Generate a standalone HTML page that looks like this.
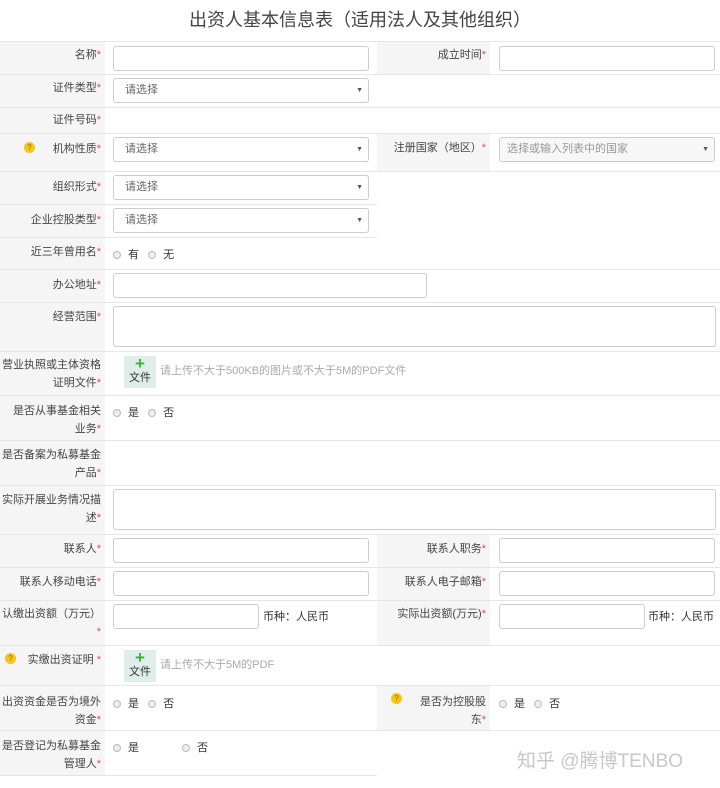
<!DOCTYPE html>
<html><head><meta charset="utf-8"><style>
*{margin:0;padding:0;box-sizing:border-box}
body{width:720px;height:788px;background:#fff;position:relative;overflow:hidden;font-family:"Liberation Sans","Noto Sans CJK SC",sans-serif;font-size:11px;color:#333}
.a{position:absolute}
.t{left:0;top:6px;width:720px;text-align:center;font-size:18px;color:#444}
.hl{position:absolute;height:1px;background:#e6e6e6}
.lb{position:absolute;background:#f5f5f5}
.lab{position:absolute;text-align:right;line-height:18px;font-size:11px;color:#444}
.lab i{font-style:normal;color:#d9534f}
.in{position:absolute;border:1px solid #ccc;border-radius:3px;background:#fff}
.sel{position:absolute;border:1px solid #ccc;border-radius:3px;background:#fff;color:#666;padding-left:11px;line-height:23px;font-size:11px}
.sel:after{content:"▼";position:absolute;right:5px;top:0;font-size:7px;color:#555}
.r{position:absolute;font-size:11px;line-height:14px}
.r b{display:inline-block;width:8px;height:8px;border:1px solid #bbb;border-radius:50%;background:#eee;margin-right:7px;vertical-align:-1px}
.q{display:inline-block;width:11px;height:11px;border-radius:50%;background:#f5c518;color:#8a6d00;font-size:8px;text-align:center;line-height:11px;position:absolute}
.up{position:absolute;width:32px;height:32px;background:#dfeeea;text-align:center;font-size:11px;line-height:12px;color:#333}
.up span{display:block;color:#3cb034;font-size:17px;font-weight:bold;line-height:16px}
.hint{position:absolute;color:#aaa;font-size:11px}
</style></head><body>
<div class="a t">出资人基本信息表（适用法人及其他组织）</div>

<div class="lb" style="left:0;top:41px;width:105px;height:734px"></div>
<div class="lb" style="left:377px;top:41px;width:113px;height:33px"></div>
<div class="lb" style="left:377px;top:133px;width:113px;height:38px"></div>
<div class="lb" style="left:377px;top:534px;width:113px;height:111px"></div>
<div class="lb" style="left:377px;top:685px;width:113px;height:45px"></div>

<div class="hl" style="left:0;top:41px;width:720px"></div>
<div class="hl" style="left:0;top:74px;width:720px"></div>
<div class="hl" style="left:0;top:107px;width:720px"></div>
<div class="hl" style="left:0;top:133px;width:720px"></div>
<div class="hl" style="left:0;top:171px;width:720px"></div>
<div class="hl" style="left:0;top:204px;width:377px"></div>
<div class="hl" style="left:0;top:237px;width:377px"></div>
<div class="hl" style="left:0;top:269px;width:720px"></div>
<div class="hl" style="left:0;top:302px;width:720px"></div>
<div class="hl" style="left:0;top:351px;width:720px"></div>
<div class="hl" style="left:0;top:395px;width:720px"></div>
<div class="hl" style="left:0;top:440px;width:720px"></div>
<div class="hl" style="left:0;top:485px;width:720px"></div>
<div class="hl" style="left:0;top:534px;width:720px"></div>
<div class="hl" style="left:0;top:567px;width:720px"></div>
<div class="hl" style="left:0;top:600px;width:720px"></div>
<div class="hl" style="left:0;top:645px;width:720px"></div>
<div class="hl" style="left:0;top:685px;width:720px"></div>
<div class="hl" style="left:0;top:730px;width:720px"></div>
<div class="hl" style="left:0;top:775px;width:377px"></div>

<div class="lab" style="left:0;top:46px;width:101px">名称<i>*</i></div>
<div class="lab" style="left:377px;top:46px;width:109px">成立时间<i>*</i></div>
<div class="lab" style="left:0;top:79px;width:101px">证件类型<i>*</i></div>
<div class="lab" style="left:0;top:111px;width:101px">证件号码<i>*</i></div>
<div class="q" style="left:24px;top:142px">?</div>
<div class="lab" style="left:0;top:140px;width:101px">机构性质<i>*</i></div>
<div class="lab" style="left:377px;top:139px;width:109px">注册国家（地区）<i>*</i></div>
<div class="lab" style="left:0;top:178px;width:101px">组织形式<i>*</i></div>
<div class="lab" style="left:0;top:211px;width:101px">企业控股类型<i>*</i></div>
<div class="lab" style="left:0;top:243px;width:101px">近三年曾用名<i>*</i></div>
<div class="lab" style="left:0;top:276px;width:101px">办公地址<i>*</i></div>
<div class="lab" style="left:0;top:308px;width:101px">经营范围<i>*</i></div>
<div class="lab" style="left:0;top:356px;width:101px">营业执照或主体资格<br>证明文件<i>*</i></div>
<div class="lab" style="left:0;top:402px;width:101px">是否从事基金相关<br>业务<i>*</i></div>
<div class="lab" style="left:0;top:446px;width:101px">是否备案为私募基金<br>产品<i>*</i></div>
<div class="lab" style="left:0;top:491px;width:101px">实际开展业务情况描<br>述<i>*</i></div>
<div class="lab" style="left:0;top:540px;width:101px">联系人<i>*</i></div>
<div class="lab" style="left:377px;top:540px;width:109px">联系人职务<i>*</i></div>
<div class="lab" style="left:0;top:573px;width:101px">联系人移动电话<i>*</i></div>
<div class="lab" style="left:377px;top:573px;width:109px">联系人电子邮箱<i>*</i></div>
<div class="lab" style="left:0;top:605px;width:101px">认缴出资额（万元）<br><i>*</i></div>
<div class="lab" style="left:377px;top:605px;width:109px">实际出资额(万元)<i>*</i></div>
<div class="q" style="left:5px;top:653px">?</div>
<div class="lab" style="left:0;top:651px;width:101px">实缴出资证明 <i>*</i></div>
<div class="lab" style="left:0;top:693px;width:101px">出资资金是否为境外<br>资金<i>*</i></div>
<div class="q" style="left:391px;top:693px">?</div>
<div class="lab" style="left:377px;top:693px;width:109px">是否为控股股<br>东<i>*</i></div>
<div class="lab" style="left:0;top:737px;width:101px">是否登记为私募基金<br>管理人<i>*</i></div>

<div class="in" style="left:113px;top:46px;width:256px;height:25px"></div>
<div class="in" style="left:499px;top:46px;width:216px;height:25px"></div>
<div class="sel" style="left:113px;top:78px;width:256px;height:25px">请选择</div>
<div class="sel" style="left:113px;top:137px;width:256px;height:25px">请选择</div>
<div class="sel" style="left:499px;top:137px;width:216px;height:25px;background:#f7f7f7;color:#999;padding-left:7px">选择或输入列表中的国家</div>
<div class="sel" style="left:113px;top:175px;width:256px;height:25px">请选择</div>
<div class="sel" style="left:113px;top:208px;width:256px;height:25px">请选择</div>
<div class="r" style="left:113px;top:248px"><b></b>有&nbsp;&nbsp;&nbsp;<b></b>无</div>
<div class="in" style="left:113px;top:273px;width:314px;height:25px"></div>
<div class="in" style="left:113px;top:306px;width:603px;height:41px"></div>
<div class="up" style="left:124px;top:356px"><span>+</span>文件</div>
<div class="hint" style="left:160px;top:362px">请上传不大于500KB的图片或不大于5M的PDF文件</div>
<div class="r" style="left:113px;top:406px"><b></b>是&nbsp;&nbsp;&nbsp;<b></b>否</div>
<div class="in" style="left:113px;top:489px;width:603px;height:41px"></div>
<div class="in" style="left:113px;top:538px;width:256px;height:25px"></div>
<div class="in" style="left:499px;top:538px;width:216px;height:25px"></div>
<div class="in" style="left:113px;top:571px;width:256px;height:25px"></div>
<div class="in" style="left:499px;top:571px;width:216px;height:25px"></div>
<div class="in" style="left:113px;top:604px;width:146px;height:25px"></div>
<div class="a" style="left:263px;top:608px">币种：人民币</div>
<div class="in" style="left:499px;top:604px;width:146px;height:25px"></div>
<div class="a" style="left:648px;top:608px">币种：人民币</div>
<div class="up" style="left:124px;top:650px"><span>+</span>文件</div>
<div class="hint" style="left:160px;top:656px">请上传不大于5M的PDF</div>
<div class="r" style="left:113px;top:697px"><b></b>是&nbsp;&nbsp;&nbsp;<b></b>否</div>
<div class="r" style="left:499px;top:697px"><b></b>是&nbsp;&nbsp;&nbsp;<b></b>否</div>
<div class="r" style="left:113px;top:741px"><b></b>是</div>
<div class="r" style="left:182px;top:741px"><b></b>否</div>
<div class="a" style="left:517px;top:746px;font-size:19px;color:#c8c8c8">知乎 @腾博TENBO</div>
</body></html>
